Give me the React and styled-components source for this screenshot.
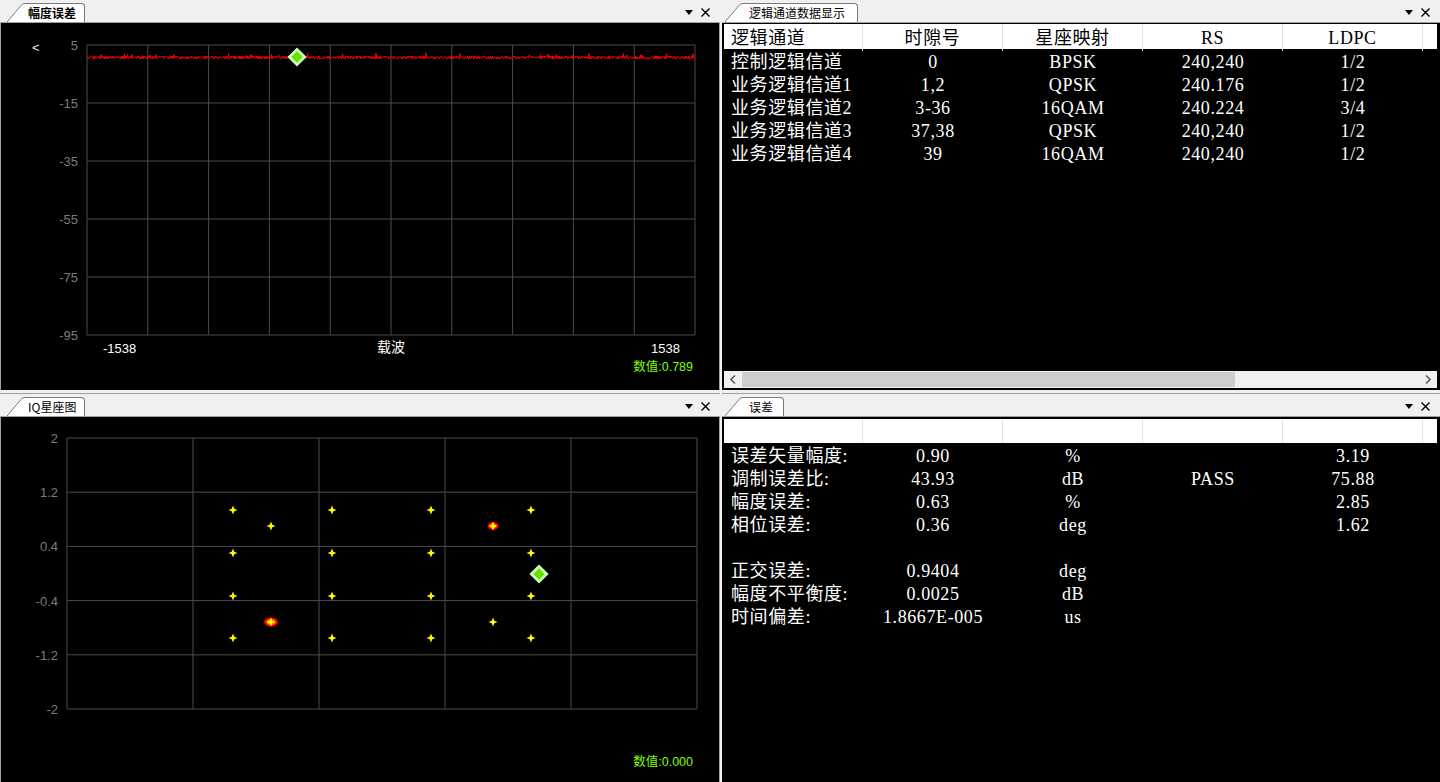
import React from 'react'
import styled, { createGlobalStyle } from 'styled-components'

const GlobalStyle = createGlobalStyle`
  html, body {
    margin: 0;
    padding: 0;
    background: #f0f0f0;
    overflow: hidden;
  }
  #root {
    width: 1440px;
    height: 782px;
  }
`

const Screen = styled.div`
  width: 1440px;
  height: 782px;
  display: grid;
  grid-template-columns: 720px 718px;
  grid-template-rows: 390px 389px;
  column-gap: 2px;
  row-gap: 3px;
  background: #f0f0f0;
  font-family: 'Noto Sans CJK SC', sans-serif;
`

const Panel = styled.section`
  display: flex;
  flex-direction: column;
  min-height: 0;
`

const TabStrip = styled.div`
  box-sizing: border-box;
  height: ${(p) => (p.$divided ? 24 : 23)}px;
  flex: none;
  display: flex;
  align-items: flex-end;
  padding: 0 10px 0 ${(p) => p.$left}px;
  border-top: ${(p) => (p.$divided ? '1px solid #a0a0a0' : 'none')};
  border-bottom: 1px solid #a0a0a0;
  background: #f0f0f0;
`

const Tab = styled.div`
  display: flex;
  align-items: flex-end;
  height: 19px;
`

const TabLabel = styled.div`
  height: 19px;
  box-sizing: border-box;
  background: #fff;
  border-top: 1px solid #7a7a7a;
  border-right: 1px solid #7a7a7a;
  border-top-right-radius: 4px;
  padding: 0 ${(p) => p.$padRight}px 0 ${(p) => p.$padLeft}px;
  font-size: 12px;
  line-height: 18px;
  color: #000;
  font-weight: ${(p) => (p.$bold ? 700 : 400)};
  white-space: nowrap;
`

const StripTools = styled.div`
  margin-left: auto;
  align-self: center;
  display: flex;
  align-items: center;
  gap: 8px;
  padding-top: 2px;
`

const ChartBody = styled.div`
  flex: 1;
  min-height: 0;
  background: #000;
  border-left: 1px solid #a0a0a0;
  border-right: 1px solid #a0a0a0;
  overflow: hidden;

  svg {
    display: block;
  }
`

const ListBody = styled.div`
  flex: 1;
  min-height: 0;
  background: #000;
  display: flex;
  flex-direction: column;
  padding: ${(p) => p.$pt}px 3px 2px 2px;
  overflow: hidden;
`

const GRID = '139px repeat(4, 140px) 1fr'
const LIST_FONT = "'Liberation Serif', 'Noto Sans CJK SC', serif"

const HeaderRow = styled.div`
  display: grid;
  grid-template-columns: ${GRID};
  height: ${(p) => p.$h}px;
  flex: none;
  background: #fff;
`

const HeaderCell = styled.div`
  border-right: 1px solid #e3e3e3;
  color: #000;
  font-family: ${LIST_FONT};
  font-size: 18px;
  letter-spacing: 0.6px;
  line-height: ${(p) => p.$h}px;
  padding-top: 2px;
  text-align: ${(p) => (p.$first ? 'left' : 'center')};
  padding-left: ${(p) => (p.$first ? 7 : 0)}px;
  white-space: nowrap;

  &:last-child {
    border-right: none;
  }
`

const Row = styled.div`
  display: grid;
  grid-template-columns: ${GRID};
  height: 23px;
  flex: none;
`

const Cell = styled.div`
  color: #fff;
  font-family: ${LIST_FONT};
  font-size: 18px;
  letter-spacing: 0.6px;
  line-height: 23px;
  padding-top: 2px;
  text-align: ${(p) => (p.$first ? 'left' : 'center')};
  padding-left: ${(p) => (p.$first ? 7 : 0)}px;
  white-space: nowrap;
`

const Spacer = styled.div`
  flex: 1;
`

const ScrollBar = styled.div`
  display: flex;
  height: 17px;
  flex: none;
  background: #f0f0f0;
`

const ScrollButton = styled.div`
  width: 18px;
  display: flex;
  align-items: center;
  justify-content: center;
`

const ScrollTrack = styled.div`
  flex: 1;
  display: flex;
  padding: 1px 0;
`

const ScrollThumb = styled.div`
  width: 493px;
  background: #cdcdcd;
`

const DropIcon = () => (
  <svg width='8' height='5' viewBox='0 0 8 5'>
    <path d='M0 0 L8 0 L4 5 Z' fill='#000' />
  </svg>
)

const CloseIcon = () => (
  <svg width='9' height='9' viewBox='0 0 9 9'>
    <path d='M0.5 0.5 L8.5 8.5 M8.5 0.5 L0.5 8.5' stroke='#000' strokeWidth='1.4' />
  </svg>
)

const Chevron = ({ dir }) => (
  <svg width='6' height='9' viewBox='0 0 6 9'>
    <path
      d={dir === 'left' ? 'M5 0.5 L1 4.5 L5 8.5' : 'M1 0.5 L5 4.5 L1 8.5'}
      stroke='#606060'
      strokeWidth='1.6'
      fill='none'
    />
  </svg>
)

const TabSlant = () => (
  <svg width='18' height='19' viewBox='0 0 18 19'>
    <path d='M0 19 L14 2.5 Q15.5 0.5 18 0.5 L18 19 Z' fill='#fff' />
    <path d='M0 19 L14 2.5 Q15.5 0.5 18 0.5' stroke='#7a7a7a' fill='none' />
  </svg>
)

const PanelTab = ({ title, bold, padLeft = 3, padRight = 8, left = 7, divided }) => (
  <TabStrip $left={left} $divided={divided}>
    <Tab>
      <TabSlant />
      <TabLabel $bold={bold} $padLeft={padLeft} $padRight={padRight}>
        {title}
      </TabLabel>
    </Tab>
    <StripTools>
      <DropIcon />
      <CloseIcon />
    </StripTools>
  </TabStrip>
)

// noisy amplitude-error trace, seeded so it is the same every load
function makeTrace() {
  let s = 98765
  const rnd = () => {
    s = (s * 16807) % 2147483647
    return s / 2147483647
  }
  const pts = []
  for (let x = 87; x <= 695; x += 0.5) {
    let y = 57.5 + (rnd() - 0.5) * 3.2
    if (rnd() < 0.025) y -= 1.5 + rnd() * 3
    pts.push(`${x},${y.toFixed(1)}`)
  }
  return pts.join(' ')
}
const TRACE = makeTrace()

const AXIS_FONT = "'Liberation Sans', 'Noto Sans CJK SC', sans-serif"

const Diamond = ({ x, y }) => (
  <g transform={`translate(${x} ${y}) rotate(45)`}>
    <rect x='-6.8' y='-6.8' width='13.6' height='13.6' fill='#c8ffb4' />
    <rect x='-4' y='-4' width='8' height='8' fill='#66e000' />
  </g>
)

const Sparkle = ({ x, y }) => (
  <path
    transform={`translate(${x} ${y})`}
    d='M0 -4.5 L1.3 -1.3 L4.5 0 L1.3 1.3 L0 4.5 L-1.3 1.3 L-4.5 0 L-1.3 -1.3 Z'
    fill='#ffff00'
  />
)

const Blob = ({ x, y, rx, ry }) => (
  <g>
    <ellipse cx={x} cy={y} rx={rx} ry={ry} fill='#ff0000' />
    <ellipse cx={x} cy={y} rx={rx - 2.5} ry={ry - 1.8} fill='#ff8a00' />
    <Sparkle x={x} y={y} />
  </g>
)

const AmplitudeChart = () => {
  const xs = Array.from({ length: 11 }, (_, i) => 87 + i * 60.8)
  const ys = ['5', '-15', '-35', '-55', '-75', '-95']
  return (
    <svg width='718' height='367' viewBox='1 23 718 367'>
      {xs.map((x) => (
        <line key={x} x1={x} y1='45' x2={x} y2='335' stroke='#4a4a4a' />
      ))}
      {ys.map((label, j) => (
        <g key={label}>
          <line x1='87' y1={45 + j * 58} x2='695' y2={45 + j * 58} stroke='#4a4a4a' />
          <text x='78' y={50 + j * 58} textAnchor='end' fill='#7c7c7c' fontSize='13' fontFamily={AXIS_FONT}>
            {label}
          </text>
        </g>
      ))}
      <text x='32' y='52' fill='#e2eaff' fontSize='13' fontFamily={AXIS_FONT}>
        &lt;
      </text>
      <polyline points={TRACE} fill='none' stroke='#ff0000' strokeWidth='1' />
      <Diamond x={297} y={57} />
      <text x='103' y='353' fill='#fff' fontSize='13' fontFamily={AXIS_FONT}>
        -1538
      </text>
      <text x='391' y='352' textAnchor='middle' fill='#fff' fontSize='14' fontFamily={AXIS_FONT}>
        载波
      </text>
      <text x='680' y='353' textAnchor='end' fill='#fff' fontSize='13' fontFamily={AXIS_FONT}>
        1538
      </text>
      <text x='693' y='371' textAnchor='end' fill='#7fff00' fontSize='12.5' fontFamily={AXIS_FONT}>
        数值:0.789
      </text>
    </svg>
  )
}

const IQ_COLS = [233, 332, 431, 531]
const IQ_ROWS = [510, 553, 596, 638]

const ConstellationChart = () => {
  const xs = Array.from({ length: 6 }, (_, i) => 67 + i * 126)
  const ys = ['2', '1.2', '0.4', '-0.4', '-1.2', '-2']
  return (
    <svg width='718' height='365' viewBox='1 417 718 365'>
      {xs.map((x) => (
        <line key={x} x1={x} y1='438' x2={x} y2='709' stroke='#4a4a4a' />
      ))}
      {ys.map((label, j) => (
        <g key={label}>
          <line x1='67' y1={438 + j * 54.2} x2='697' y2={438 + j * 54.2} stroke='#4a4a4a' />
          <text x='58' y={443 + j * 54.2} textAnchor='end' fill='#7c7c7c' fontSize='13' fontFamily={AXIS_FONT}>
            {label}
          </text>
        </g>
      ))}
      {IQ_ROWS.map((y) => IQ_COLS.map((x) => <Sparkle key={`${x}-${y}`} x={x} y={y} />))}
      <Sparkle x={271} y={526} />
      <Sparkle x={493} y={622} />
      <Blob x={493} y={526} rx={5.5} ry={4} />
      <Blob x={271} y={622} rx={7} ry={4.5} />
      <Diamond x={539} y={574} />
      <text x='693' y='766' textAnchor='end' fill='#7fff00' fontSize='12.5' fontFamily={AXIS_FONT}>
        数值:0.000
      </text>
    </svg>
  )
}

const channelHeader = ['逻辑通道', '时隙号', '星座映射', 'RS', 'LDPC', '']
const channelRows = [
  ['控制逻辑信道', '0', 'BPSK', '240,240', '1/2'],
  ['业务逻辑信道1', '1,2', 'QPSK', '240.176', '1/2'],
  ['业务逻辑信道2', '3-36', '16QAM', '240.224', '3/4'],
  ['业务逻辑信道3', '37,38', 'QPSK', '240,240', '1/2'],
  ['业务逻辑信道4', '39', '16QAM', '240,240', '1/2'],
]

const errorRows = [
  ['误差矢量幅度:', '0.90', '%', '', '3.19'],
  ['调制误差比:', '43.93', 'dB', 'PASS', '75.88'],
  ['幅度误差:', '0.63', '%', '', '2.85'],
  ['相位误差:', '0.36', 'deg', '', '1.62'],
  ['', '', '', '', ''],
  ['正交误差:', '0.9404', 'deg', '', ''],
  ['幅度不平衡度:', '0.0025', 'dB', '', ''],
  ['时间偏差:', '1.8667E-005', 'us', '', ''],
]

const TableRows = ({ rows }) =>
  rows.map((row, i) => (
    <Row key={i}>
      {row.map((text, j) => (
        <Cell key={j} $first={j === 0}>
          {text}
        </Cell>
      ))}
    </Row>
  ))

const Header = ({ labels, h }) => (
  <HeaderRow $h={h}>
    {labels.map((label, i) => (
      <HeaderCell key={i} $first={i === 0} $h={h}>
        {label}
      </HeaderCell>
    ))}
  </HeaderRow>
)

const App = () => (
  <>
    <GlobalStyle />
    <Screen>
      <Panel>
        <PanelTab title='幅度误差' bold />
        <ChartBody>
          <AmplitudeChart />
        </ChartBody>
      </Panel>

      <Panel>
        <PanelTab title='逻辑通道数据显示' left={3} padLeft={6} padRight={12} />
        <ListBody $pt={1}>
          <Header labels={channelHeader} h={25} />
          <TableRows rows={channelRows} />
          <Spacer />
          <ScrollBar>
            <ScrollButton>
              <Chevron dir='left' />
            </ScrollButton>
            <ScrollTrack>
              <ScrollThumb />
            </ScrollTrack>
            <ScrollButton>
              <Chevron dir='right' />
            </ScrollButton>
          </ScrollBar>
        </ListBody>
      </Panel>

      <Panel>
        <PanelTab title='IQ星座图' divided />
        <ChartBody>
          <ConstellationChart />
        </ChartBody>
      </Panel>

      <Panel>
        <PanelTab title='误差' left={3} padLeft={6} padRight={10} divided />
        <ListBody $pt={2}>
          <Header labels={['', '', '', '', '', '']} h={24} />
          <TableRows rows={errorRows} />
        </ListBody>
      </Panel>
    </Screen>
  </>
)

export default App
